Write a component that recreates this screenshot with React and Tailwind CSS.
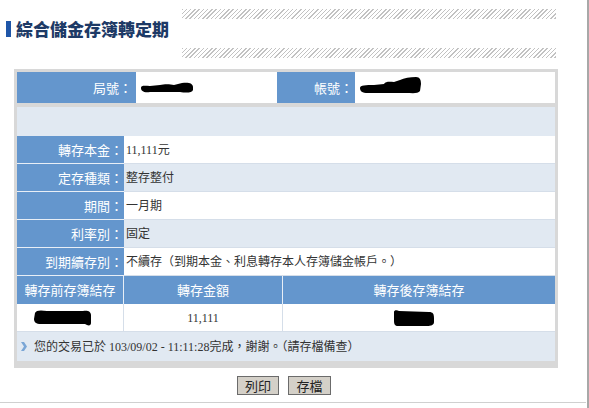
import React from "react";

const cjk = { fontFamily: '"Noto Sans CJK TC", "Noto Sans", sans-serif' };
const mixed = { fontFamily: '"Liberation Serif", "Noto Sans CJK TC", serif' };

function Hatch() {
  return (
    <div className="h-[10px] w-full bg-[repeating-linear-gradient(135deg,#c2c2c2_0px,#c2c2c2_1px,#ffffff_1px,#ffffff_3px)]" />
  );
}

function Blob({ w, h, d, vw, vh }) {
  return (
    <svg width={w} height={h} viewBox={`0 0 ${vw} ${vh}`}>
      <path d={d} fill="#000" />
    </svg>
  );
}

function LabelCell({ children, className = "" }) {
  return (
    <div
      className={`flex items-center justify-end bg-[#6496cd] text-white text-[13px] pr-[1px] ${className}`}
      style={cjk}
    >
      {children}
    </div>
  );
}

function InfoRow({ label, value, shade }) {
  return (
    <div className="flex h-[28px]">
      <LabelCell className="w-[107px] border-b border-[#e8eef6]">{label}</LabelCell>
      <div
        className={`flex-1 flex items-center pl-[2px] text-[12px] text-[#333] border-b border-[#d5dee9] ${
          shade ? "bg-[#e1e9f2]" : "bg-white"
        }`}
        style={mixed}
      >
        {value}
      </div>
    </div>
  );
}

export default function App() {
  return (
    <div className="w-[589px] h-[408px] bg-white flex">
      <div className="w-[586px] h-[403px] border-b border-[#d0d0d0] flex flex-col">
        {/* Title */}
        <div className="flex pt-[9px] h-[58px]">
          <div className="w-[182px] flex items-start pt-[12px] pl-[6px]">
            <div className="w-[5px] h-[16px] bg-[#1f56a8]" />
            <div
              className="ml-[5px] -mt-[2px] text-[17px] leading-[20px] font-black text-[#1d3a66]"
              style={cjk}
            >
              綜合儲金存簿轉定期
            </div>
          </div>
          <div className="w-[374px] flex flex-col">
            <Hatch />
            <div className="h-[29px]" />
            <Hatch />
          </div>
        </div>

        {/* Box */}
        <div className="ml-[14px] mt-[11px] w-[544px] bg-[#d8d8d8] px-[3px] pt-[3px] pb-[7px] flex flex-col gap-[4px]">
          {/* Row 1 */}
          <div className="flex h-[31px]">
            <LabelCell className="w-[119px] pr-[4px]">局號：</LabelCell>
            <div className="w-[141px] bg-white flex items-center pl-[4px]">
              <Blob
                w={53}
                h={11}
                vw={53}
                vh={11}
                d="M1 6 C1 3 5 4 10 4 L20 3 C24 2 30 2 34 3 L42 1 C48 0 53 1 53 5 L53 8 C52 11 46 11 40 10 L10 10 C4 11 1 9 1 6 Z"
              />
            </div>
            <LabelCell className="w-[78px] pr-[2px]">帳號：</LabelCell>
            <div className="flex-1 bg-white flex items-center pl-[5px]">
              <div className="mt-[-4px]">
                <Blob
                  w={61}
                  h={17}
                  vw={61}
                  vh={17}
                  d="M0 11 C0 8 6 8 14 8 L24 7 C26 4 30 5 34 5 L40 3 C44 1 50 0 56 0 C60 0 61 3 61 7 L60 14 C58 17 52 16 46 16 L8 16 C2 16 0 14 0 11 Z"
                />
              </div>
            </div>
          </div>

          {/* Section 2 */}
          <div className="flex flex-col">
            <div className="h-[29px] bg-[#e1e9f2]" />
            <InfoRow label="轉存本金：" value="11,111元" />
            <InfoRow label="定存種類：" value="整存整付" shade />
            <InfoRow label="期間：" value="一月期" />
            <InfoRow label="利率別：" value="固定" shade />
            <InfoRow
              label="到期續存別："
              value="不續存（到期本金、利息轉存本人存簿儲金帳戶。）"
            />
            {/* header */}
            <div className="flex h-[28px] bg-[#6496cd] text-white text-[13px]" style={cjk}>
              <div className="w-[107px] flex items-center justify-center border-r border-[#e8eef6]">
                轉存前存簿結存
              </div>
              <div className="w-[159px] flex items-center justify-center border-r border-[#e8eef6]">
                轉存金額
              </div>
              <div className="flex-1 flex items-center justify-center">轉存後存簿結存</div>
            </div>
            {/* data */}
            <div className="flex h-[28px] bg-white text-[12px] text-[#333] border-b border-[#d5dee9]" style={mixed}>
              <div className="w-[107px] flex items-center pl-[16px] border-r border-[#d5dee9]">
                <Blob
                  w={58}
                  h={17}
                  vw={58}
                  vh={17}
                  d="M2 4 C3 1 8 1 14 2 L50 2 C54 1 58 2 58 6 L58 14 C58 17 55 17 52 15 L8 15 C3 15 1 13 1 10 Z"
                />
              </div>
              <div className="w-[159px] flex items-center justify-center border-r border-[#d5dee9]">
                11,111
              </div>
              <div className="flex-1 flex items-center pl-[110px]">
                <Blob
                  w={41}
                  h={16}
                  vw={41}
                  vh={16}
                  d="M1 2 C1 0 4 0 6 1 L36 2 C40 2 41 4 41 8 L41 12 C41 15 38 16 34 16 L5 16 C2 16 1 14 1 11 Z"
                />
              </div>
            </div>
            {/* message */}
            <div className="flex h-[29px] items-center bg-[#e1e9f2] text-[12px] text-[#333]" style={mixed}>
              <svg width="8" height="9" viewBox="0 0 8 9" className="ml-[3px] mr-[6px]">
                <path d="M1 0 L4 0 L7 4.5 L4 9 L1 9 L4 4.5 Z" fill="#7aa6d6" />
              </svg>
              您的交易已於 103/09/02 - 11:11:28完成，謝謝。（請存檔備查）
            </div>
          </div>
        </div>

        {/* Buttons */}
        <div className="ml-[14px] w-[544px] mt-[8px] flex justify-center gap-[9px] pr-[4px]">
          <button
            className="w-[42px] h-[19px] bg-[#d4d0c8] border border-[#6b6b6b] text-[13px] leading-[17px] text-[#222]"
            style={cjk}
          >
            列印
          </button>
          <button
            className="w-[43px] h-[19px] bg-[#d4d0c8] border border-[#6b6b6b] text-[13px] leading-[17px] text-[#222]"
            style={cjk}
          >
            存檔
          </button>
        </div>
      </div>
      <div className="w-[1px]" />
      <div className="w-[2px] h-full bg-[#a8a8a8]" />
    </div>
  );
}
